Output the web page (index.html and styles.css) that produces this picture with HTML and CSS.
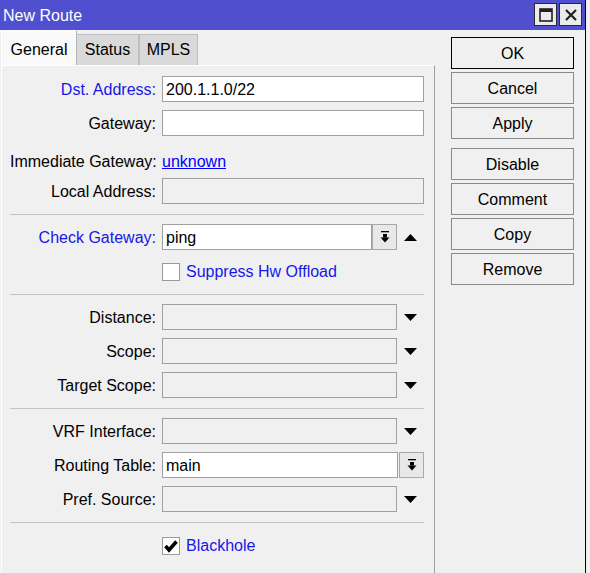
FILE: index.html
```html
<!DOCTYPE html>
<html>
<head>
<meta charset="utf-8">
<link rel="stylesheet" href="styles.css">
</head>
<body>
<div class="window">
  <div class="titlebar">
    <span class="title">New Route</span>
    <div class="tb-buttons">
      <div class="tb-btn">
        <svg width="14" height="14" viewBox="0 0 14 14"><rect x="1" y="1" width="12" height="12" fill="none" stroke="#222" stroke-width="1.6"/><rect x="1" y="1" width="12" height="3" fill="#222"/></svg>
      </div>
      <div class="tb-btn">
        <svg width="14" height="14" viewBox="0 0 14 14"><path d="M2 2 L12 12 M12 2 L2 12" stroke="#222" stroke-width="2.2"/></svg>
      </div>
    </div>
  </div>
  <div class="body">
    <div class="left">
      <div class="tabs">
        <div class="tab active">General</div>
        <div class="tab tab-status">Status</div>
        <div class="tab tab-mpls">MPLS</div>
      </div>
      <div class="panel">
        <div class="row">
          <label class="lbl blue">Dst. Address:</label>
          <div class="input">200.1.1.0/22</div>
        </div>
        <div class="row">
          <label class="lbl">Gateway:</label>
          <div class="input"></div>
        </div>
        <div class="row text-row">
          <label class="lbl">Immediate Gateway:</label>
          <div class="link-cell"><span class="link">unknown</span></div>
        </div>
        <div class="row">
          <label class="lbl">Local Address:</label>
          <div class="input disabled"></div>
        </div>
        <div class="sep"></div>
        <div class="row">
          <label class="lbl blue">Check Gateway:</label>
          <div class="ctl">
            <div class="input w-check">ping</div>
            <div class="dd-btn"><svg width="10" height="12" viewBox="0 0 10 12"><rect x="1" y="0" width="8" height="1.3" fill="#000"/><rect x="3" y="3" width="4" height="3.6" fill="#000"/><polygon points="0.5,6.5 9.5,6.5 5,11.5" fill="#000"/></svg></div>
            <div class="arrow-zone"><svg width="13" height="7" viewBox="0 0 13 7"><polygon points="0,7 13,7 6.5,0" fill="#000"/></svg></div>
          </div>
        </div>
        <div class="row">
          <span></span>
          <div class="check-cell"><span class="cb"></span><span class="cb-text">Suppress Hw Offload</span></div>
        </div>
        <div class="sep"></div>
        <div class="row">
          <label class="lbl">Distance:</label>
          <div class="ctl">
            <div class="input disabled w-dd"></div>
            <div class="arrow-zone"><svg width="13" height="7" viewBox="0 0 13 7"><polygon points="0,0 13,0 6.5,7" fill="#000"/></svg></div>
          </div>
        </div>
        <div class="row">
          <label class="lbl">Scope:</label>
          <div class="ctl">
            <div class="input disabled w-dd"></div>
            <div class="arrow-zone"><svg width="13" height="7" viewBox="0 0 13 7"><polygon points="0,0 13,0 6.5,7" fill="#000"/></svg></div>
          </div>
        </div>
        <div class="row">
          <label class="lbl">Target Scope:</label>
          <div class="ctl">
            <div class="input disabled w-dd"></div>
            <div class="arrow-zone"><svg width="13" height="7" viewBox="0 0 13 7"><polygon points="0,0 13,0 6.5,7" fill="#000"/></svg></div>
          </div>
        </div>
        <div class="sep"></div>
        <div class="row">
          <label class="lbl">VRF Interface:</label>
          <div class="ctl">
            <div class="input disabled w-dd"></div>
            <div class="arrow-zone"><svg width="13" height="7" viewBox="0 0 13 7"><polygon points="0,0 13,0 6.5,7" fill="#000"/></svg></div>
          </div>
        </div>
        <div class="row">
          <label class="lbl">Routing Table:</label>
          <div class="ctl">
            <div class="input w-rt">main</div>
            <div class="dd-btn rt-btn"><svg width="10" height="12" viewBox="0 0 10 12"><rect x="1" y="0" width="8" height="1.3" fill="#000"/><rect x="3" y="3" width="4" height="3.6" fill="#000"/><polygon points="0.5,6.5 9.5,6.5 5,11.5" fill="#000"/></svg></div>
          </div>
        </div>
        <div class="row">
          <label class="lbl">Pref. Source:</label>
          <div class="ctl">
            <div class="input disabled w-dd"></div>
            <div class="arrow-zone"><svg width="13" height="7" viewBox="0 0 13 7"><polygon points="0,0 13,0 6.5,7" fill="#000"/></svg></div>
          </div>
        </div>
        <div class="sep"></div>
        <div class="row">
          <span></span>
          <div class="check-cell"><span class="cb"><svg width="16" height="16" viewBox="0 0 16 16"><path d="M2.5 8 L6 12 L13.5 3.5" fill="none" stroke="#000" stroke-width="3.6"/></svg></span><span class="cb-text">Blackhole</span></div>
        </div>
      </div>
    </div>
    <div class="buttons">
      <div class="btn default">OK</div>
      <div class="btn">Cancel</div>
      <div class="btn">Apply</div>
      <div class="btn gap-top">Disable</div>
      <div class="btn">Comment</div>
      <div class="btn">Copy</div>
      <div class="btn">Remove</div>
    </div>
  </div>
</div>
</body>
</html>
```

FILE: styles.css
```css
html, body {
  margin: 0;
  padding: 0;
  background: #f0f0f0;
}
body {
  font-family: "Liberation Sans", Arial, sans-serif;
  font-size: 16px;
  color: #000;
  width: 590px;
  height: 573px;
  overflow: hidden;
}
.window {
  width: 586px;
  height: 573px;
  box-sizing: border-box;
  border-right: 1px solid #000;
  background: #f0f0f0;
  display: flex;
  flex-direction: column;
}
.titlebar {
  height: 30px;
  flex: none;
  background: #4f4fcf;
  display: flex;
  justify-content: space-between;
  align-items: flex-start;
  box-sizing: border-box;
  padding: 3px 3px 0 3px;
}
.title {
  color: #fff;
  font-size: 16px;
  line-height: 24px;
  padding-top: 1px;
}
.tb-buttons {
  display: flex;
  gap: 2px;
}
.tb-btn {
  width: 23px;
  height: 23px;
  box-sizing: border-box;
  border: 1px solid #2a2a2a;
  background: #ebebeb;
  display: flex;
  align-items: center;
  justify-content: center;
}
.tb-btn svg { display: block; }
.body {
  flex: 1;
  display: flex;
  min-height: 0;
}
.left {
  width: 434px;
  margin-left: 1px;
  display: flex;
  flex-direction: column;
}
.tabs {
  height: 35px;
  display: flex;
  align-items: flex-end;
  flex: none;
}
.tab {
  box-sizing: border-box;
  text-align: center;
  line-height: 18px;
  padding-bottom: 6px;
  padding-top: 6px;
  border: 1px solid #bdbdbd;
  border-bottom: none;
  background: #d9d9d9;
}
.tab.active {
  width: 76px;
  padding-top: 10px;
  background: #f9f9f9;
  border-color: #ffffff;
  border-right-color: #b5b5b5;
}
.tab-status { width: 62px; border-left: none; }
.tab-mpls { width: 59px; border-left: 1px solid #bdbdbd; }
.panel {
  flex: 1;
  box-sizing: border-box;
  border-top: 1px solid #fff;
  border-left: 1px solid #fff;
  border-right: 1px solid #a0a0a0;
  padding: 10px 10px 0 8px;
  display: flex;
  flex-direction: column;
  gap: 8px;
}
.row {
  display: grid;
  grid-template-columns: 146px 262px;
  column-gap: 6px;
  height: 26px;
}
.lbl {
  text-align: right;
  line-height: 26px;
  padding-top: 1px;
  white-space: nowrap;
}
.text-row .lbl,
.text-row .link-cell {
  padding-top: 5px;
}
.blue { color: #1717e8; }
.input {
  box-sizing: border-box;
  height: 26px;
  border: 1px solid #a0a0a0;
  background: #fff;
  padding-left: 3px;
  padding-top: 1px;
  line-height: 23px;
  white-space: nowrap;
}
.input.disabled { background: #f0f0f0; }
.link-cell { line-height: 26px; }
.link {
  color: #0000ff;
  text-decoration: underline;
}
.ctl {
  display: flex;
  height: 26px;
}
.w-check { width: 210px; flex: none; }
.w-dd { width: 235px; flex: none; }
.w-rt { width: 236px; flex: none; }
.dd-btn {
  box-sizing: border-box;
  width: 25px;
  height: 26px;
  border: 1px solid #a8a8a8;
  background: #e8e8e8;
  display: flex;
  align-items: center;
  justify-content: center;
}
.dd-btn svg { display: block; }
.rt-btn { margin-left: 1px; }
.arrow-zone {
  width: 27px;
  display: flex;
  align-items: center;
  justify-content: center;
}
.arrow-zone svg { display: block; }
.sep {
  height: 1px;
  background: #c2c2c2;
  margin: 2px 0 1px 0;
  flex: none;
}
.check-cell {
  display: flex;
  align-items: center;
  gap: 6px;
  padding-top: 1px;
}
.cb {
  width: 18px;
  height: 18px;
  box-sizing: border-box;
  border: 1px solid #9a9a9a;
  background: #fff;
  display: flex;
  align-items: center;
  justify-content: center;
}
.cb svg { display: block; }
.cb-text { color: #1717e8; }
.buttons {
  margin-left: 16px;
  padding-top: 7px;
  display: flex;
  flex-direction: column;
  gap: 3px;
}
.btn {
  width: 123px;
  height: 32px;
  box-sizing: border-box;
  border: 1px solid #8a8a8a;
  background: #f0f0f0;
  text-align: center;
  line-height: 30px;
  padding-top: 1px;
}
.btn.default { border-color: #000; }
.btn.gap-top { margin-top: 6px; }
```
